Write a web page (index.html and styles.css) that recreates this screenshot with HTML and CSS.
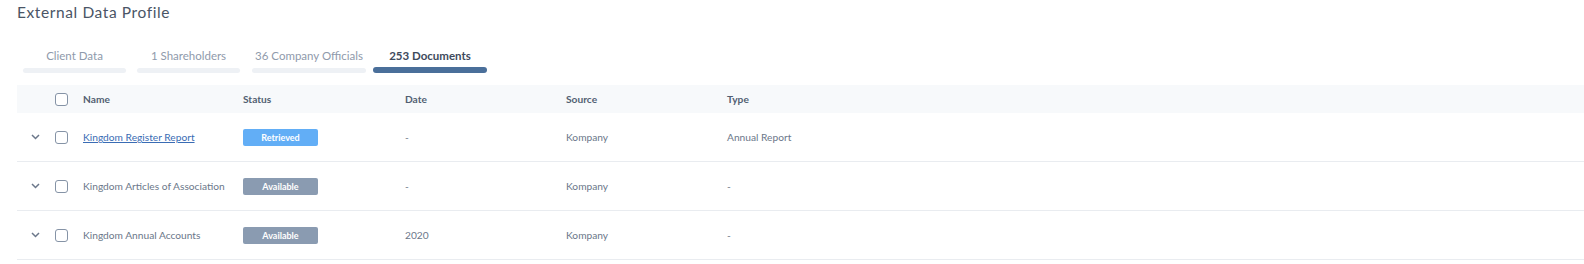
FILE: index.html
```html
<!DOCTYPE html>
<html>
<head>
<meta charset="utf-8">
<link rel="stylesheet" href="styles.css">
</head>
<body>
<h1 class="title">External Data Profile</h1>
<div class="tabs">
  <div class="tab tab-1"><span class="tab-label">Client Data</span><span class="tab-bar"></span></div>
  <div class="tab tab-2"><span class="tab-label">1 Shareholders</span><span class="tab-bar"></span></div>
  <div class="tab tab-3"><span class="tab-label">36 Company Officials</span><span class="tab-bar"></span></div>
  <div class="tab tab-4 active"><span class="tab-label">253 Documents</span><span class="tab-bar"></span></div>
</div>
<div class="table">
  <div class="row head">
    <div class="cell"></div>
    <div class="cell"><span class="checkbox"></span></div>
    <div class="cell">Name</div>
    <div class="cell">Status</div>
    <div class="cell">Date</div>
    <div class="cell">Source</div>
    <div class="cell">Type</div>
  </div>
  <div class="row">
    <div class="cell chev"><svg width="9" height="6" viewBox="0 0 9 6"><path d="M1 1l3.5 3.5L8 1" fill="none" stroke="#6b778a" stroke-width="1.5"/></svg></div>
    <div class="cell"><span class="checkbox"></span></div>
    <div class="cell"><a class="link" href="#">Kingdom Register Report</a></div>
    <div class="cell"><span class="badge retrieved">Retrieved</span></div>
    <div class="cell">-</div>
    <div class="cell">Kompany</div>
    <div class="cell">Annual Report</div>
  </div>
  <div class="row">
    <div class="cell chev"><svg width="9" height="6" viewBox="0 0 9 6"><path d="M1 1l3.5 3.5L8 1" fill="none" stroke="#6b778a" stroke-width="1.5"/></svg></div>
    <div class="cell"><span class="checkbox"></span></div>
    <div class="cell">Kingdom Articles of Association</div>
    <div class="cell"><span class="badge available">Available</span></div>
    <div class="cell">-</div>
    <div class="cell">Kompany</div>
    <div class="cell">-</div>
  </div>
  <div class="row">
    <div class="cell chev"><svg width="9" height="6" viewBox="0 0 9 6"><path d="M1 1l3.5 3.5L8 1" fill="none" stroke="#6b778a" stroke-width="1.5"/></svg></div>
    <div class="cell"><span class="checkbox"></span></div>
    <div class="cell">Kingdom Annual Accounts</div>
    <div class="cell"><span class="badge available">Available</span></div>
    <div class="cell">2020</div>
    <div class="cell">Kompany</div>
    <div class="cell">-</div>
  </div>
</div>
</body>
</html>
```

FILE: styles.css
```css
html, body {
  margin: 0;
  padding: 0;
  background: #ffffff;
}
body {
  font-family: Lato, "Noto Sans", sans-serif;
  color: #6b778a;
}
.title {
  margin: 0;
  padding: 2px 0 0 17px;
  height: 24px;
  font-family: Lato, sans-serif;
  font-weight: 400;
  font-size: 15.5px;
  letter-spacing: 0.6px;
  line-height: 20px;
  color: #4a5566;
}
.tabs {
  display: flex;
  margin-top: 19px;
  height: 40px;
}
.tab {
  display: flex;
  flex-direction: column;
  align-items: center;
  padding-top: 4px;
}
.tab-1 { margin-left: 23px; width: 103px; }
.tab-2 { margin-left: 11px; width: 103px; }
.tab-3 { margin-left: 12px; width: 114px; }
.tab-4 { margin-left: 7px; width: 114px; }
.tab-label {
  font-size: 11.5px;
  line-height: 14px;
  color: #8f9aab;
  white-space: nowrap;
}
.tab-bar {
  margin-top: 5px;
  width: 100%;
  height: 5px;
  border-radius: 3px;
  background: #eef1f5;
}
.tab.active .tab-label {
  color: #3e4a5c;
  font-weight: 700;
}
.tab.active .tab-bar {
  background: #4a6f9a;
  height: 6px;
  margin-top: 4px;
}
.table {
  margin-left: 17px;
}
.row {
  display: grid;
  grid-template-columns: 38px 28px 160px 162px 161px 161px 1fr;
  height: 48px;
  align-items: center;
  border-bottom: 1px solid #e9ecf0;
  font-size: 10.2px;
}
.row.head {
  height: 28px;
  background: #f7f9fb;
  border-bottom: none;
  font-weight: 700;
  color: #525f72;
}
.cell {
  display: flex;
  align-items: center;
  white-space: nowrap;
}
.chev {
  padding-left: 14px;
}
.checkbox {
  display: inline-block;
  width: 11px;
  height: 11px;
  border: 1.5px solid #8593a6;
  border-radius: 3px;
  background: #fff;
}
.link {
  color: #3a6cb4;
  text-decoration: underline;
}
.badge {
  display: inline-flex;
  align-items: center;
  justify-content: center;
  width: 75px;
  height: 17px;
  border-radius: 2px;
  color: #ffffff;
  font-size: 9px;
  font-weight: 700;
}
.retrieved { background: #62aef6; }
.available { background: #8a9bb1; }
```
